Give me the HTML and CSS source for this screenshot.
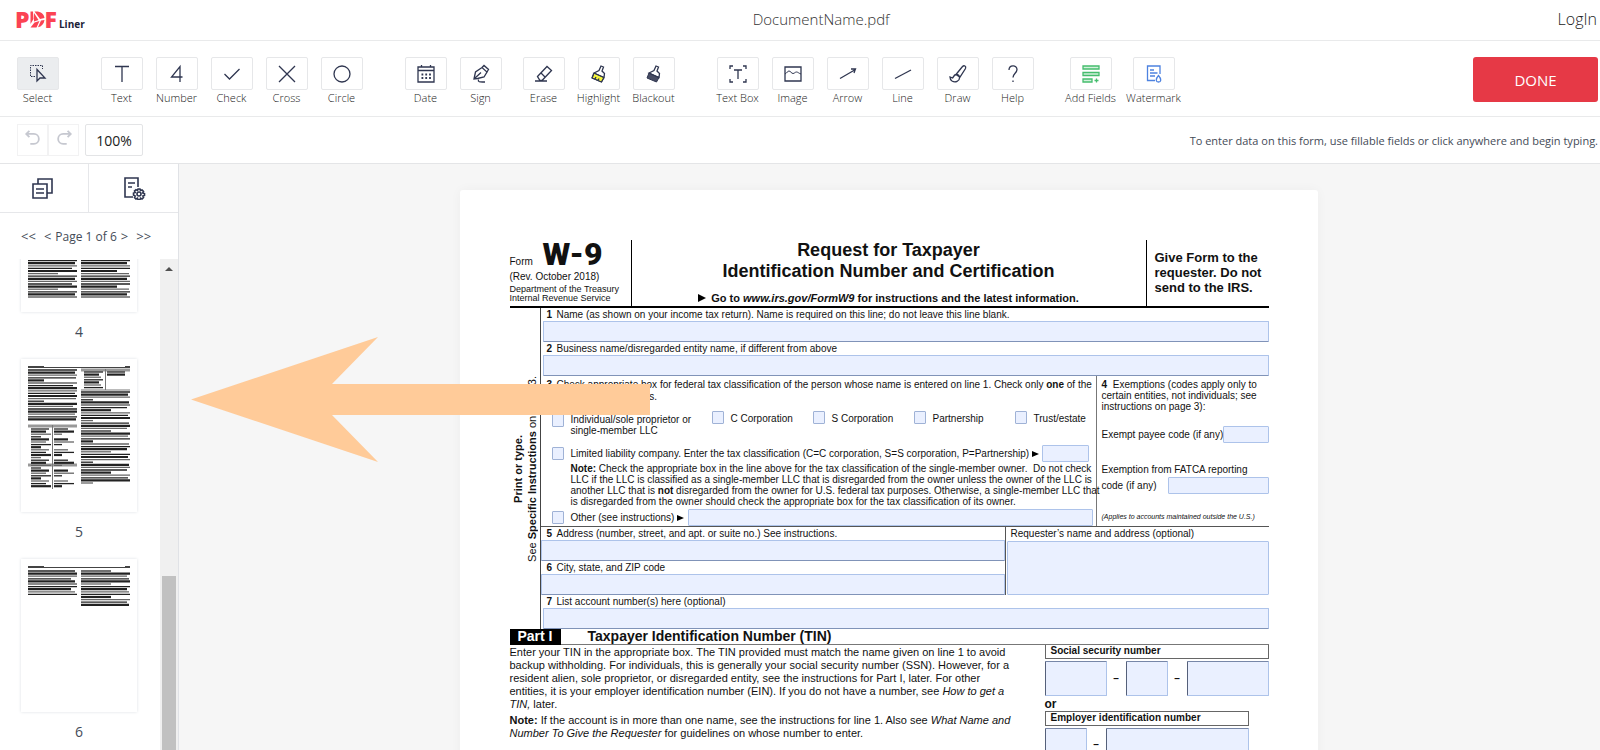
FILE: index.html
```
<!DOCTYPE html>
<html lang="en">
<head>
  <meta charset="UTF-8" />
  <title>PDFLiner</title>
  <meta name="viewport" content="width=device-width, initial-scale=1.0" />
  <link rel="stylesheet" href="styles.css">
</head>
<body>
  <header class="top-bar">
    <a href="#" class="logo">
      <span class="logo-pdf">P<svg viewBox="0 0 14 17"><path d="M0 .5h2.5L3 8 0 13zM4 .5C10 0 13.5 2.5 14 7L9.5 8zM3.5 2l4.5 7-4.5 1.500zM0 16.500l4-5 5-1.500-3 6.500zM10.500 9.500l3.500-.5c-.5 4-3 6.500-6.500 7.300z"/></svg>F</span>
      <span class="logo-liner">Liner</span>
    </a>
    <span class="doc-name">DocumentName.pdf</span>
    <a href="#" class="login">LogIn</a>
  </header>

  <div class="toolbar">
    <div class="tool-group">
      <button class="tool active"><span class="tool-icon"><svg viewBox="0 0 20 20"><path class="dash" d="M7 12.5H2.5v-11h12V5"/><path class="thick" d="M9 5.5v11.5l3-3h5z"/></svg></span>Select</button>
    </div>
    <div class="tool-group">
      <button class="tool"><span class="tool-icon"><svg viewBox="0 0 20 20"><path class="thick" d="M3 2.5h14M10 2.5v15.5"/></svg></span>Text</button>
      <button class="tool"><span class="tool-icon"><svg viewBox="0 0 20 20"><path class="thick" d="M13 18V2.5L4.5 13H15.5"/></svg></span>Number</button>
      <button class="tool"><span class="tool-icon"><svg viewBox="0 0 20 20"><path class="thick" d="M2.5 10l5 5L17.5 5"/></svg></span>Check</button>
      <button class="tool"><span class="tool-icon"><svg viewBox="0 0 20 20"><path class="thick" d="M2 2l16 16M18 2L2 18"/></svg></span>Cross</button>
      <button class="tool"><span class="tool-icon"><svg viewBox="0 0 20 20"><circle class="thick" cx="10" cy="10" r="8"/></svg></span>Circle</button>
    </div>
    <div class="tool-group">
      <button class="tool"><span class="tool-icon"><svg viewBox="0 0 20 20"><path class="thick" d="M2 3h16v15H2zM2 6.5h16M5.5 1v2M14.5 1v2"/><path class="dots" d="M5.5 10.5h9.5M5.5 14h9.5"/></svg></span>Date</button>
      <button class="tool"><span class="tool-icon"><svg viewBox="0 0 20 20"><path class="thick" d="M3 15L4.5 8l6.5-4.500L16 8l-3 5-6.500 1.500zM3 15L10 8.500M11 3.500l2-2 4.500 4L16 8M7.500 15.500c-1 3 2 2.500 6.500 2.500"/></svg></span>Sign</button>
    </div>
    <div class="tool-group near">
      <button class="tool"><span class="tool-icon"><svg viewBox="0 0 20 20"><path class="thick" d="M3.500 12.500L13 2.500l4.500 4-9.500 10H6zM7 9l4.500 4.500M1 17h12"/></svg></span>Erase</button>
      <button class="tool"><span class="tool-icon"><svg viewBox="0 0 20 20"><path class="yellow" d="M5 9l10 4.500-2.500 4.500L3 14z"/><path class="thick" d="M5 9l5-2.500 2-4.500 2.500 1L13 7l2.500 2.500-.5 4zM5 9l-2 5 9.500 4 2.500-4.500M6 15l1-2M9 16.500l1-2"/></svg></span>Highlight</button>
      <button class="tool"><span class="tool-icon"><svg viewBox="0 0 20 20"><path class="solid" d="M5 9l10 4.500-2.500 4.500L3 14z"/><path class="thick" d="M5 9l5-2.500 2-4.500 2.500 1L13 7l2.500 2.500-.5 4z"/></svg></span>Blackout</button>
    </div>
    <div class="tool-group">
      <button class="tool"><span class="tool-icon"><svg viewBox="0 0 20 20"><path class="thick" d="M2 5V2h3M15 2h3v3M18 15v3h-3M5 18H2v-3"/><path class="thick" d="M6 6h8M10 6v9"/></svg></span>Text Box</button>
      <button class="tool"><span class="tool-icon"><svg viewBox="0 0 20 20"><path class="thick" d="M2 3h16v14H2z"/><path d="M2 10c2-1 2.500-3 4-3s2.500 2.500 4 2.500S12 8 13.500 8 16 9.500 18 10"/></svg></span>Image</button>
      <button class="tool"><span class="tool-icon"><svg viewBox="0 0 20 20"><path class="thick" d="M2 14.500L17.500 5.500M13 5h4.500L16 9"/></svg></span>Arrow</button>
      <button class="tool"><span class="tool-icon"><svg viewBox="0 0 20 20"><path class="thick" d="M2 14.500L18 6"/></svg></span>Line</button>
      <button class="tool"><span class="tool-icon"><svg viewBox="0 0 20 20"><path class="thick" d="M8 10.500l6.500-8c1.500-1.500 4-.5 3 2L12 13zM8 10.500c2 0 3.500 1.500 3.500 3.500 0 3-4 5-7.500 3-1.500-1-2-3-2-4l2.500 1c1-.5 1-3 3.500-3.500z"/></svg></span>Draw</button>
      <button class="tool"><span class="tool-icon"><svg viewBox="0 0 20 20"><path class="thick" d="M6 6c0-5.500 8-5.500 8-.5 0 3.500-4 4-4 8M10 16.500v1.500"/></svg></span>Help</button>
    </div>
    <div class="tool-group wide">
      <button class="tool"><span class="tool-icon"><svg class="green" viewBox="0 0 20 20"><path d="M2 2h16v3H2zM2 8.500h16v3H2zM2 15h9v3H2z"/><path d="M13.500 16.500h4M15.500 14.500v4"/></svg></span>Add Fields</button>
      <button class="tool"><span class="tool-icon"><svg class="blue" viewBox="0 0 20 20"><path d="M11 16.500H3.500V2H16v8M6 6h4M6 9h7.500M6 12h5M14.500 11.500c3.500 4 2.500 6.500 0 6.500s-3.500-2.500 0-6.500z"/></svg></span>Watermark</button>
    </div>
    <button class="done">DONE</button>
  </div>

  <div class="sub-bar">
    <button class="history" aria-label="Undo"><svg viewBox="0 0 20 20"><path d="M6 2L2.500 5.500 6 9M2.500 5.500H11a5.500 5.500 0 0 1 0 11H7"/></svg></button>
    <button class="history" aria-label="Redo"><svg viewBox="0 0 20 20"><path d="M14 2l3.500 3.500L14 9M17.500 5.500H9a5.500 5.500 0 0 0 0 11h4"/></svg></button>
    <button class="zoom">100%</button>
    <span class="hint">To enter data on this form, use fillable fields or click anywhere and begin typing.</span>
  </div>

  <div class="workspace">
    <aside class="sidebar">
      <div class="tabs">
        <button aria-label="Pages"><svg viewBox="0 0 24 24"><path d="M8 8V3h14v14h-5M3 8h14v14H3zM6 13h8M6 17h8"/></svg></button>
        <button aria-label="Page settings"><svg viewBox="0 0 24 24"><path d="M11 21H3V2h13v9M6 7h7M6 11h4"/><circle cx="17" cy="18" r="2"/><path d="M16 13h2l.5 1.500 1.500-.5 1.500 1.500-.8 1.500 1.800.5v2l-1.600.5.6 1.500-1.500 1.500-1.500-.8-.5 1.600h-2l-.5-1.600-1.500.8-1.500-1.500.7-1.500L11.500 19v-2l1.700-.5-.7-1.500L14 13.800l1.500.7z"/></svg></button>
      </div>
      <nav class="pager">
        <a href="#">&lt;&lt;</a>
        <a href="#">&lt;</a>
        <span>Page 1 of 6</span>
        <a href="#">&gt;</a>
        <a href="#">&gt;&gt;</a>
      </nav>
      <div class="pages">
        <div class="thumbs">
          <a href="#" class="thumb"><svg viewBox="0 0 116 153" data-page="4"></svg><span>4</span></a>
          <a href="#" class="thumb"><svg viewBox="0 0 116 153" data-page="5"></svg><span>5</span></a>
          <a href="#" class="thumb"><svg viewBox="0 0 116 153" data-page="6"></svg><span>6</span></a>
        </div>
        <div class="scrollbar">
          <svg viewBox="0 0 8 4"><path d="M0 4l4-4 4 4z"/></svg>
          <div class="scroll-handle"></div>
        </div>
      </div>
    </aside>

    <main class="canvas">
      <form class="page">
        <div class="form-head">
          <div class="form-id">
            <div class="form-no">Form <b>W-9</b></div>
            <div class="rev">(Rev. October 2018)</div>
            <div class="dept">Department of the Treasury<br>Internal Revenue Service</div>
          </div>
          <div class="form-title">
            <h1>Request for Taxpayer<br>Identification Number and Certification</h1>
            <p><i class="tri"></i>Go to <em>www.irs.gov/FormW9</em> for instructions and the latest information.</p>
          </div>
          <div class="form-give">Give Form to the<br>requester. Do not<br>send to the IRS.</div>
        </div>

        <div class="form-body">
          <div class="rail">
            <div><b>Print or type.</b><br>See <b>Specific Instructions</b> on page 3.</div>
          </div>
          <div class="rows">
            <div class="row">
              <label for="f1"><b>1</b>Name (as shown on your income tax return). Name is required on this line; do not leave this line blank.</label>
              <input type="text" id="f1">
            </div>
            <div class="row">
              <label for="f2"><b>2</b>Business name/disregarded entity name, if different from above</label>
              <input type="text" id="f2">
            </div>

            <div class="class-row">
              <div class="tax-class">
                <p class="lead"><b>3</b>Check appropriate box for federal tax classification of the person whose name is entered on line 1. Check only <strong>one</strong> of the<br><span>following seven boxes.</span></p>
                <div class="options">
                  <label class="first"><input type="checkbox"><span>Individual/sole proprietor or<br>single-member LLC</span></label>
                  <label><input type="checkbox">C Corporation</label>
                  <label><input type="checkbox">S Corporation</label>
                  <label><input type="checkbox">Partnership</label>
                  <label><input type="checkbox">Trust/estate</label>
                </div>
                <div class="llc">
                  <input type="checkbox" id="llc">
                  <label for="llc">Limited liability company. Enter the tax classification (C=C corporation, S=S corporation, P=Partnership)</label>
                  <i class="tri"></i>
                  <input type="text" class="llc-code" aria-label="LLC tax classification">
                </div>
                <p class="note"><b>Note:</b> Check the appropriate box in the line above for the tax classification of the single-member owner.&nbsp; Do not check<br>LLC if the LLC is classified as a single-member LLC that is disregarded from the owner unless the owner of the LLC is<br>another LLC that is <b>not</b> disregarded from the owner for U.S. federal tax purposes. Otherwise, a single-member LLC that<br>is disregarded from the owner should check the appropriate box for the tax classification of its owner.</p>
                <div class="llc other">
                  <input type="checkbox" id="other">
                  <label for="other">Other (see instructions)</label>
                  <i class="tri"></i>
                  <input type="text" class="grow" aria-label="Other classification">
                </div>
              </div>
              <div class="exempt">
                <p><b>4</b> Exemptions (codes apply only to<br>certain entities, not individuals; see<br>instructions on page 3):</p>
                <div class="exempt-line">
                  <label for="payee">Exempt payee code (if any)</label>
                  <input type="text" id="payee">
                </div>
                <label class="fatca" for="fatca">Exemption from FATCA reporting</label>
                <div class="exempt-line fatca-line">
                  <label for="fatca">code (if any)</label>
                  <input type="text" id="fatca">
                </div>
                <small>(Applies to accounts maintained outside the U.S.)</small>
              </div>
            </div>

            <div class="address">
              <div class="address-left">
                <div class="row">
                  <label for="f5"><b>5</b>Address (number, street, and apt. or suite no.) See instructions.</label>
                  <input type="text" id="f5">
                </div>
                <div class="row">
                  <label for="f6"><b>6</b>City, state, and ZIP code</label>
                  <input type="text" id="f6">
                </div>
              </div>
              <div class="requester">
                <label for="req">Requester’s name and address (optional)</label>
                <textarea id="req"></textarea>
              </div>
            </div>
            <div class="row">
              <label for="f7"><b>7</b>List account number(s) here (optional)</label>
              <input type="text" id="f7">
            </div>
          </div>
        </div>

        <h2><span>Part I</span>Taxpayer Identification Number (TIN)</h2>
        <div class="part">
          <div class="part-text">
            <p>Enter your TIN in the appropriate box. The TIN provided must match the name given on line 1 to avoid<br>backup withholding. For individuals, this is generally your social security number (SSN). However, for a<br>resident alien, sole proprietor, or disregarded entity, see the instructions for Part I, later. For other<br>entities, it is your employer identification number (EIN). If you do not have a number, see <em>How to get a<br>TIN,</em> later.</p>
            <p><b>Note:</b> If the account is in more than one name, see the instructions for line 1. Also see <em>What Name and<br>Number To Give the Requester</em> for guidelines on whose number to enter.</p>
          </div>
          <div class="tin">
            <label class="tin-title" for="ssn1">Social security number</label>
            <div class="tin-boxes ssn">
              <input type="text" id="ssn1"><span>–</span><input type="text" aria-label="SSN middle digits"><span>–</span><input type="text" aria-label="SSN last digits">
            </div>
            <b class="or">or</b>
            <label class="tin-title short" for="ein1">Employer identification number</label>
            <div class="tin-boxes ein short">
              <input type="text" id="ein1"><span>–</span><input type="text" aria-label="EIN last digits">
            </div>
          </div>
        </div>
      </form>
    </main>
  </div>

  <svg class="pointer" viewBox="0 0 460 126"><path d="M0 62.500L187 0 141 47H459V78H141L187 125z"/></svg>

  <script src="script.js"></script>
</body>
</html>
```

FILE: styles.css
```
* { box-sizing: border-box; margin: 0; padding: 0; }

body {
  font-family: 'Open Sans', 'Noto Sans', sans-serif;
  background-color: #fff;
  color: #444b57;
  height: 100vh;
  overflow: hidden;
  display: flex;
  flex-direction: column;
}

button {
  font-family: inherit;
  color: inherit;
  background: none;
  border: none;
  cursor: pointer;
}

a {
  color: inherit;
  text-decoration: none;
}

svg {
  fill: none;
  stroke: #2f3650;
}

/* top bar */
.top-bar {
  display: flex;
  justify-content: space-between;
  align-items: center;
  height: 41px;
  padding: 0 3px 2px 15px;
  border-bottom: 1px solid #e9eaeb;
  flex-shrink: 0;
}

.logo {
  display: flex;
  align-items: baseline;
  gap: 2px;
}

.logo-pdf {
  display: flex;
  align-items: baseline;
  font-size: 23px;
  line-height: 24px;
  font-weight: 800;
  color: #fb4353;
}

.logo-pdf svg {
  width: 15px;
  height: 17px;
  fill: #fb4353;
  stroke: none;
}

.logo-liner {
  font-size: 10px;
  font-weight: 700;
  color: #1b2138;
}

.doc-name {
  font-size: 15px;
  font-weight: 300;
  color: #333;
}

.login {
  font-size: 16px;
  font-weight: 300;
  color: #222;
}

/* toolbar */
.toolbar {
  display: flex;
  align-items: flex-start;
  gap: 29px;
  height: 76px;
  padding: 16px 2px 0 10px;
  border-bottom: 1px solid #e9eaeb;
  flex-shrink: 0;
}

.tool-group {
  display: flex;
}

.tool-group.near {
  margin-left: -21px;
}

.tool-group.wide {
  margin-left: -10px;
}

.tool {
  display: flex;
  flex-direction: column;
  align-items: center;
  width: 55px;
  font-size: 11px;
  font-weight: 300;
  line-height: 16px;
  color: #222;
  white-space: nowrap;
}

.wide .tool {
  width: 63px;
}

.tool-icon {
  display: flex;
  align-items: center;
  justify-content: center;
  width: 42px;
  height: 33px;
  border: 1px solid #e6e7e9;
  border-radius: 2px;
}

.active .tool-icon {
  background-color: #ebedef;
}

.tool-icon svg {
  width: 20px;
  height: 20px;
}

.thick { stroke-width: 1.3; }
.dash { stroke-dasharray: 1.5 1; }
.dots { stroke-width: 1.8; stroke-dasharray: 1.8 2; }
.yellow { fill: #f4f43c; }
.solid { fill: #474c63; }
.green { stroke: #45bd6e; fill: #d2f1dc; stroke-width: 1.3; }
.blue { stroke: #4d82e0; stroke-width: 1.3; }

.done {
  margin-left: auto;
  width: 125px;
  height: 45px;
  background-color: #e63946;
  border-radius: 3px;
  color: #fff;
  font-size: 15px;
}

/* undo / zoom bar */
.sub-bar {
  display: flex;
  align-items: center;
  height: 47px;
  padding: 0 2px 0 17px;
  border-bottom: 1px solid #e4e5e7;
  flex-shrink: 0;
}

.history {
  width: 31px;
  height: 32px;
  border: 1px solid #f2f2f3;
}

.history svg {
  width: 18px;
  height: 18px;
  stroke: #c6c8d0;
  stroke-width: 2;
}

.zoom {
  width: 58px;
  height: 32px;
  margin-left: 6px;
  border: 1px solid #e3e4e6;
  border-radius: 2px;
  font-size: 14px;
  color: #222;
}

.hint {
  margin-left: auto;
  font-size: 11px;
}

/* sidebar */
.workspace {
  display: flex;
  flex: 1;
  min-height: 0;
}

.sidebar {
  display: flex;
  flex-direction: column;
  width: 179px;
  border-right: 1px solid #e0e2e6;
}

.tabs {
  display: grid;
  grid-template-columns: 88px 1fr;
  height: 49px;
  border-bottom: 1px solid #e6e7ea;
}

.tabs button {
  padding: 3px 4px 0 0;
}

.tabs button + button {
  border-left: 1px solid #e6e7ea;
  padding-right: 0;
}

.tabs svg {
  width: 24px;
  height: 24px;
  stroke-width: 1.6;
}

.pager {
  display: flex;
  align-items: center;
  gap: 4px;
  height: 46px;
  padding-left: 21px;
  font-size: 12px;
  white-space: nowrap;
}

.pager a {
  font-size: 13px;
}

.pager a:first-child {
  margin-right: 4px;
}

.pager a:last-child {
  margin-left: 4px;
}

.pages {
  display: flex;
  flex: 1;
  min-height: 0;
}

.thumbs {
  display: flex;
  flex-direction: column;
  justify-content: flex-end;
  flex: 1;
  overflow: hidden;
  padding-left: 21px;
}

.thumb {
  display: block;
  width: 116px;
  flex-shrink: 0;
}

.thumb:last-child {
  margin-bottom: -9px;
}

.thumb svg {
  display: block;
  width: 116px;
  height: 153px;
  background-color: #fff;
  box-shadow: 0 0 3px #dcdfe4;
  stroke: #222;
}

.thumb span {
  display: block;
  height: 47px;
  line-height: 40px;
  text-align: center;
  font-size: 14px;
}

.scrollbar {
  display: flex;
  flex-direction: column;
  align-items: center;
  justify-content: space-between;
  width: 18px;
  background-color: #f0f0f0;
}

.scrollbar svg {
  width: 8px;
  height: 4px;
  margin-top: 8px;
  fill: #505050;
  stroke: none;
}

.scroll-handle {
  width: 14px;
  height: 35.5%;
  background-color: #c1c1c1;
}

/* document */
.canvas {
  flex: 1;
  overflow: hidden;
  padding: 26px 2px 0 0;
  background-color: #f6f6f6;
}

.page {
  width: 858px;
  min-height: 1110px;
  margin: 0 auto;
  padding: 50px 49px 50px 50px;
  background-color: #fff;
  border-radius: 3px;
  box-shadow: 0 0 12px rgba(0,0,0,0.04);
  font-family: 'Liberation Sans', Arial, sans-serif;
  font-size: 10px;
  line-height: 11px;
  color: #111;
  white-space: nowrap;
}

.page input, .page textarea {
  display: block;
  background-color: #eaf0ff;
  border: 1px solid #adc3ea;
  border-radius: 1px;
  resize: none;
}

.page input[type=checkbox] {
  appearance: none;
  width: 12px;
  height: 13px;
  border: 1px solid #9fb2d6;
  flex-shrink: 0;
}

.tri {
  display: inline-block;
  border: 3px solid transparent;
  border-left: 7px solid #000;
  border-right: none;
}

.form-head {
  display: flex;
  height: 68px;
  border-bottom: 2px solid #000;
}

.form-id {
  width: 122px;
  border-right: 1px solid #000;
}

.form-no {
  height: 31px;
  line-height: 28px;
}

.form-no b {
  margin-left: 7px;
  font-family: Roboto, 'Liberation Sans', sans-serif;
  font-size: 32px;
  font-weight: 900;
}

.rev {
  line-height: 12px;
}

.dept {
  padding-top: 2px;
  font-size: 9px;
  line-height: 9px;
}

.form-title {
  flex: 1;
  text-align: center;
}

.form-title h1 {
  font-size: 18px;
  line-height: 21px;
}

.form-title p {
  padding-top: 9px;
  font-size: 11px;
  line-height: 14px;
  font-weight: bold;
}

.form-title .tri {
  margin-right: 5px;
  border-width: 4px;
  border-left-width: 8px;
  border-right-width: 0;
}

.form-give {
  width: 123px;
  border-left: 1px solid #000;
  padding: 10px 0 0 8px;
  font-size: 13px;
  line-height: 15px;
  font-weight: bold;
}

.form-body {
  display: flex;
}

.rail {
  display: flex;
  align-items: center;
  justify-content: center;
  width: 31px;
  border-right: 1px solid #444;
}

.rail div {
  writing-mode: vertical-rl;
  transform: rotate(180deg);
  text-align: center;
  font-size: 11px;
  line-height: 14px;
}

.rows {
  flex: 1;
  min-width: 0;
}

.row label {
  display: block;
  height: 13px;
  padding-left: 6px;
  line-height: 14px;
}

.row b, .lead b {
  display: inline-block;
  width: 10px;
}

.row input {
  width: 100%;
  height: 21px;
  border-bottom-color: #8093b8;
}

.rows > .row input {
  width: calc(100% - 2px);
  margin-left: 2px;
}

.class-row {
  display: flex;
  height: 151px;
  border-bottom: 1px solid #555;
}

.tax-class {
  flex: 1;
  min-width: 0;
  border-right: 1px solid #777;
}

.lead {
  height: 35px;
  padding: 3px 0 0 6px;
  line-height: 12px;
}

.lead span {
  margin-left: 10px;
}

.options {
  display: grid;
  grid-template-columns: 160px 101px 101px 101px auto;
  height: 34px;
  padding-left: 11px;
}

.options label {
  display: flex;
  gap: 7px;
  line-height: 15px;
}

.options .first {
  padding-top: 3px;
  line-height: 11px;
}

.llc {
  display: flex;
  align-items: center;
  height: 17px;
  padding-left: 11px;
}

.llc label {
  margin: 0 3px 0 7px;
}

.llc-code {
  width: 47px;
  height: 17px;
  margin-left: 3px;
}

.note {
  padding: 1px 0 2px 30px;
}

.llc .grow {
  flex: 1;
  height: 17px;
  margin: 0 3px 0 4px;
}

.exempt {
  width: 172px;
  padding: 3px 0 0 5px;
}

.exempt b {
  margin-right: 3px;
}

.exempt-line {
  display: flex;
  justify-content: space-between;
  align-items: center;
  margin-top: 14px;
}

.exempt-line input {
  width: 49px;
  min-width: 0;
  height: 17px;
}

.fatca {
  display: block;
  margin-top: 21px;
}

.fatca-line {
  margin-top: 2px;
}

.fatca-line input {
  width: 101px;
}

.exempt small {
  display: block;
  margin-top: 17px;
  font-size: 7px;
  font-style: italic;
}

.address {
  display: flex;
}

.address-left {
  flex: 1;
  border-right: 1px solid #555;
}

.requester {
  width: 263px;
}

.requester label {
  display: block;
  height: 14px;
  padding-left: 5px;
  line-height: 13px;
}

.requester textarea {
  width: 262px;
  height: 54px;
  margin-left: 1px;
}

.page h2 {
  display: flex;
  gap: 27px;
  height: 16px;
  border-bottom: 1px solid #777;
  font-size: 14px;
  line-height: 15px;
}

.page h2 span {
  width: 51px;
  height: 16px;
  text-align: center;
  background-color: #000;
  color: #fff;
}

.part {
  display: flex;
  justify-content: space-between;
}

.part-text {
  font-size: 11px;
  line-height: 13px;
}

.part-text p {
  padding-top: 1px;
  margin-bottom: 2px;
}

.tin {
  width: 224px;
}

.tin-title {
  display: block;
  height: 14px;
  padding-left: 5px;
  border: 1px solid #666;
  border-top: none;
  font-weight: bold;
  line-height: 12px;
}

.tin-title.short {
  height: 15px;
  border-top: 1px solid #666;
}

.short {
  width: 204px;
}

.tin-boxes {
  display: grid;
  align-items: center;
  text-align: center;
  margin-top: 2px;
  font-weight: bold;
}

.tin-boxes input {
  width: 100%;
  height: 35px;
  border-left-color: #55607a;
  border-top-color: #7787a8;
}

.ssn {
  grid-template-columns: 62px 1fr 42px 1fr 82px;
}

.ein {
  grid-template-columns: 42px 1fr 143px;
}

.ein input {
  height: 32px;
}

.or {
  display: block;
  height: 15px;
  font-size: 12px;
  line-height: 16px;
}

/* arrow over the page */
.pointer {
  position: absolute;
  left: 191px;
  top: 337px;
  width: 460px;
  height: 126px;
  fill: #ffcb99;
  stroke: none;
}
```

FILE: script.js
```
// text lines of the page previews: [x, first y, last y, line widths]
const previews = {
  4: [
    [7, 8, 138, [49, 47, 49, 44, 49, 30]],
    [60, 8, 138, [49, 46, 49, 49, 36, 48]]
  ],
  5: [
    [7, 11, 62, [49, 47, 49, 48, 16, 49, 45, 49]],
    [10, 70, 128, [18, 15, 20, 10]],
    [33, 70, 128, [14, 20, 8, 0]],
    [60, 33, 124, [49, 47, 49, 12, 48, 49, 46, 30]],
    [63, 13, 30, [19, 15, 17]],
    [86, 13, 18, [18]]
  ],
  6: [
    [7, 12, 38, [47, 49, 49, 43]],
    [60, 12, 48, [30, 49, 46, 48, 49]]
  ]
};

document.querySelectorAll("[data-page]").forEach(svg => {
  const page = svg.dataset.page;
  let html = '<path stroke="#444" d="M7 8.5h102M7 7.5h16M104 7.5h5"/>';
  if (page === "5") {
    html += '<path stroke="#999" stroke-width="3" d="M7 67h49M7 106h49M60 11h49"/>';
    html += '<path stroke="#777" d="M31.5 66v64M84.5 10v21M60 31h49"/>';
  }
  previews[page].forEach(([x, top, bottom, widths]) => {
    let i = 0;
    for (let y = top; y < bottom; y += 2.6) {
      const w = widths[i % widths.length];
      const thick = i % 3 === 1 ? 2.2 : 1.3;
      const color = i % 3 === 2 ? "#666" : "#222";
      html += `<path stroke="${color}" stroke-width="${thick}" d="M${x} ${y}h${w}"/>`;
      i++;
    }
  });
  svg.innerHTML = html;
});
```
